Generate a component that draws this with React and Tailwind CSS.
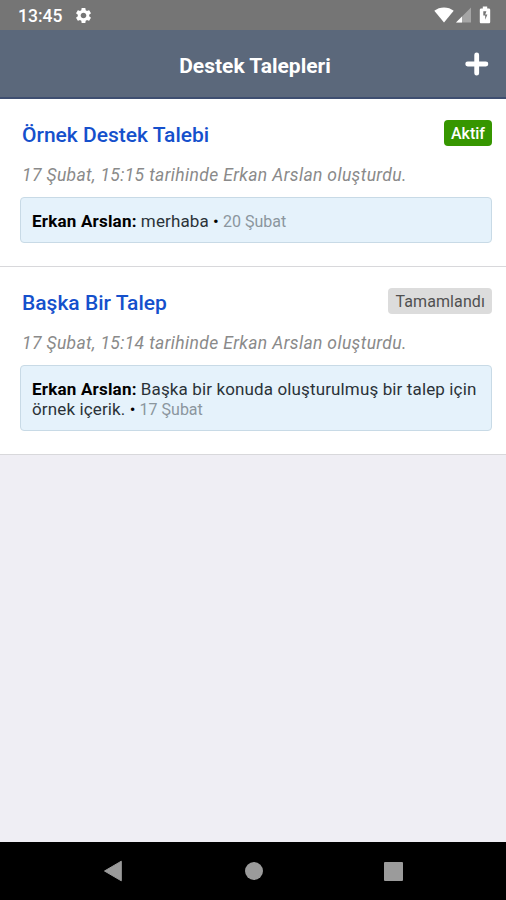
import React from 'react';
import { MdSettings } from 'react-icons/md';

const tickets = [
  {
    id: 1,
    title: 'Örnek Destek Talebi',
    status: 'Aktif',
    active: true,
    created: '17 Şubat, 15:15 tarihinde Erkan Arslan oluşturdu.',
    author: 'Erkan Arslan:',
    message: 'merhaba',
    date: '20 Şubat',
  },
  {
    id: 2,
    title: 'Başka Bir Talep',
    status: 'Tamamlandı',
    active: false,
    created: '17 Şubat, 15:14 tarihinde Erkan Arslan oluşturdu.',
    author: 'Erkan Arslan:',
    message: 'Başka bir konuda oluşturulmuş bir talep için örnek içerik.',
    date: '17 Şubat',
  },
];

const StatusBar = () => (
  <div className="h-[30px] bg-[#757575] flex items-center justify-between pl-[18px] pr-[15px] text-white flex-shrink-0">
    <div className="flex items-center gap-[12px]">
      <span className="text-[17.5px] leading-none font-medium pt-[3px]">13:45</span>
      <MdSettings className="w-[19px] h-[19px]" />
    </div>
    <div className="flex items-center">
      <svg className="w-5 h-4" viewBox="0 0 20 16" fill="currentColor">
        <path d="M10 15.5 0.3 3.8C3 1.6 6.3 0.4 10 0.4s7 1.2 9.7 3.4z" />
      </svg>
      <svg className="w-4 h-4 ml-[2px]" viewBox="0 0 16 16" fill="currentColor">
        <path d="M15 0.5v15H0z" opacity="0.35" />
        <path d="M6 9.5v6H0z" />
      </svg>
      <svg className="w-[12px] h-[18px] ml-[7px]" viewBox="0 0 12 18" fill="currentColor">
        <path d="M3.8 0.5h4.4v2h1.6c.8 0 1.4.6 1.4 1.4v12c0 .8-.6 1.4-1.4 1.4H2.2c-.8 0-1.4-.6-1.4-1.4v-12c0-.8.6-1.4 1.4-1.4h1.6z" />
        <path d="M7.4 5.2H4.3v4.3h1.9v4.2l2.2-5.2H6.2z" fill="#757575" />
      </svg>
    </div>
  </div>
);

const Header = () => (
  <header className="relative h-[69px] bg-[#5b687b] border-b-2 border-[#3e4e70] flex items-center justify-center flex-shrink-0">
    <h1 className="text-[21px] leading-6 font-bold text-white pt-[4px] pl-[4px]">Destek Talepleri</h1>
    <button className="absolute right-[17px] top-[22px] text-white">
      <svg className="w-6 h-6" viewBox="0 0 24 24" fill="none" stroke="currentColor" strokeWidth="4.8" strokeLinecap="round">
        <path d="M11.7 2.8v18.4M2.7 12h18.2" />
      </svg>
    </button>
  </header>
);

const Ticket = ({ ticket }) => (
  <article className="bg-white border-b border-[#d8d8db] pl-5 pr-[14px] pt-[21px] pb-[23px]">
    <div className="flex items-start justify-between h-[43px]">
      <h2 className="pl-[2px] pt-[3px] text-[21px] leading-6 font-medium text-[#1550cc]">{ticket.title}</h2>
      <span
        className={
          ticket.active
            ? 'h-[26px] rounded px-[7px] text-base leading-[27px] bg-[#369600] text-white font-medium'
            : 'h-[26px] rounded px-[7px] text-base leading-[27px] tracking-[0.1px] bg-[#dcdcdc] text-[#505050]'
        }
      >
        {ticket.status}
      </span>
    </div>
    <p className="pl-[2px] h-[34px] text-[17.5px] leading-6 tracking-[0.36px] italic text-[#8a8a8a]">{ticket.created}</p>
    <div className="border border-[#c8dae6] bg-[#e5f2fb] rounded-[4px] pl-[11px] pr-2 pt-[13px] pb-[11px] text-[17px] leading-5 text-[#2b3238]">
      <span className="font-bold text-black tracking-[0.2px]">{ticket.author}</span>{' '}
      <span className="tracking-[0.13px]">{ticket.message}</span> <span className="text-black">•</span>{' '}
      <span className="text-base leading-none text-[#8b969e]">{ticket.date}</span>
    </div>
  </article>
);

const NavigationBar = () => (
  <nav className="h-[58px] bg-black text-[#9b9b9b] flex justify-center items-center gap-[121px] flex-shrink-0">
    <svg className="w-5 h-[22px]" viewBox="0 0 20 22" fill="currentColor">
      <path d="M17.3 1.2v19.6L0.5 11z" stroke="currentColor" strokeLinejoin="round" />
    </svg>
    <div className="w-[18px] h-[18px] rounded-full bg-[#9b9b9b]" />
    <div className="w-[19px] h-[19px] rounded-[1px] bg-[#9b9b9b]" />
  </nav>
);

const App = () => {
  return (
    <div className="h-screen flex flex-col overflow-hidden bg-[#efeef4] font-['Roboto',sans-serif]">
      <StatusBar />
      <Header />
      <main className="flex-1">
        {tickets.map((ticket) => (
          <Ticket key={ticket.id} ticket={ticket} />
        ))}
      </main>
      <NavigationBar />
    </div>
  );
};

export default App;
